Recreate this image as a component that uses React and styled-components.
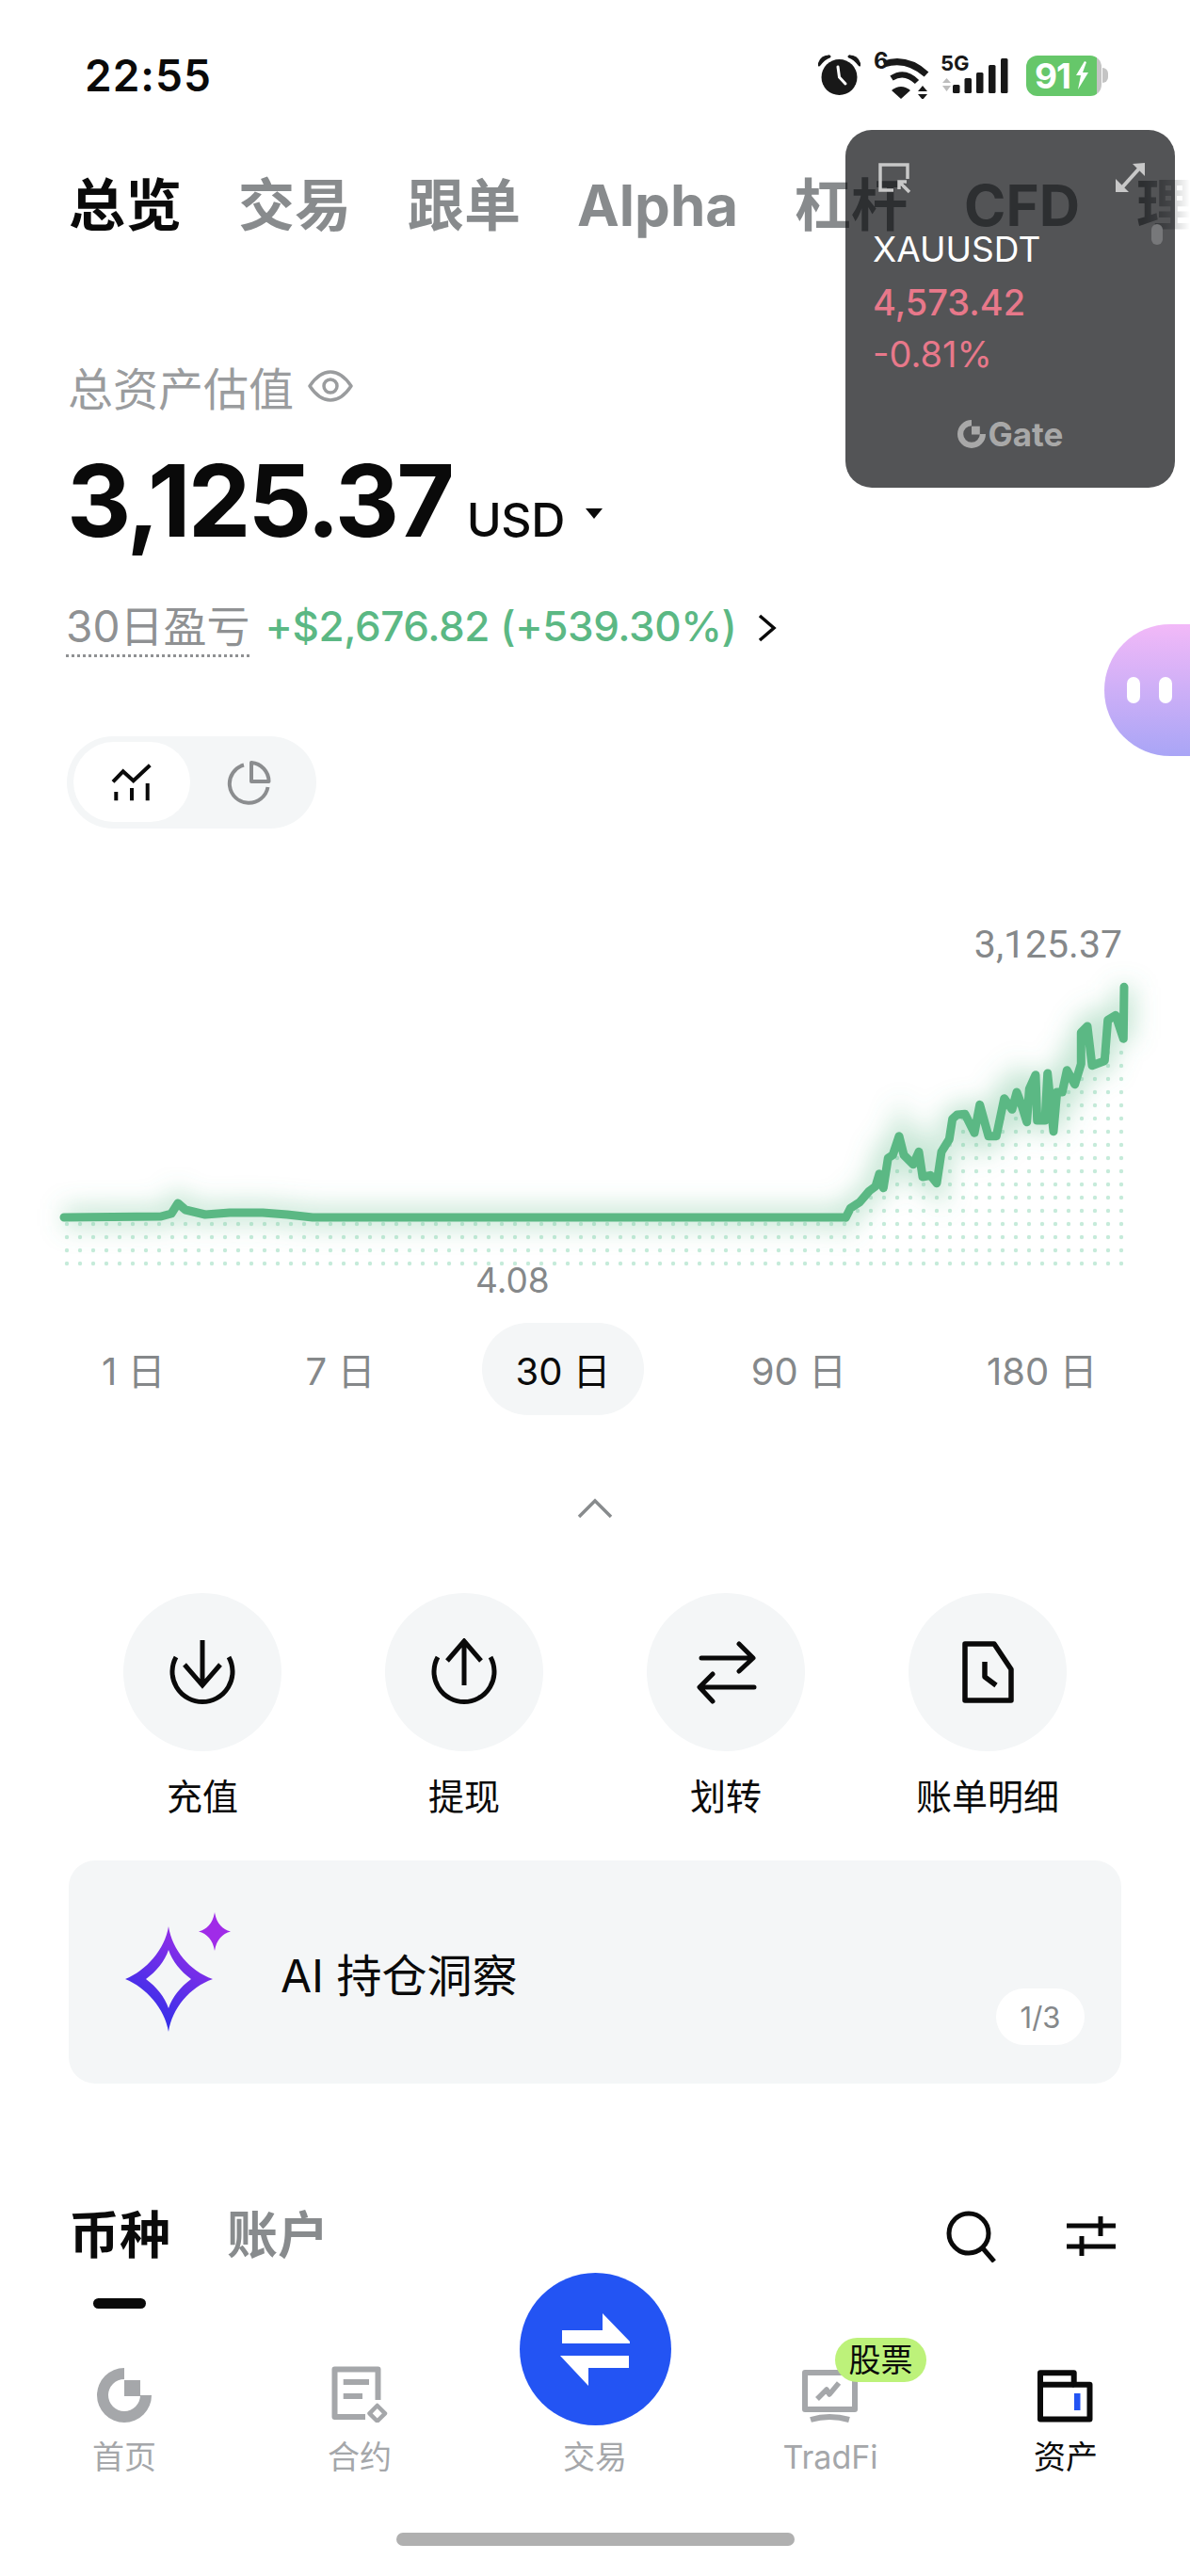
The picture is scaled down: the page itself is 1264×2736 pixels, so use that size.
import React from 'react';
import styled, { createGlobalStyle } from 'styled-components';

const GlobalStyle = createGlobalStyle`
  html, body {
    margin: 0;
    padding: 0;
    background: #fff;
  }
  body {
    font-family: Inter, "Noto Sans CJK SC", sans-serif;
    color: #0a0a0a;
  }
`;

const Page = styled.div`
  position: relative;
  width: 1264px;
  height: 2736px;
  overflow: hidden;
  background: #fff;
`;

const StatusBar = styled.div`
  height: 160px;
  padding: 0 87px 0 90px;
  display: flex;
  align-items: center;
`;

const Clock = styled.div`
  font-size: 46px;
  font-weight: 600;
  letter-spacing: 1px;
  margin-right: auto;
`;

const StatusIcons = styled.div`
  display: flex;
  align-items: center;
`;

const Battery = styled.div`
  display: flex;
  align-items: center;
  margin-left: 17px;
  height: 43px;
  width: 87px;
`;

const BatteryBody = styled.div`
  width: 80px;
  height: 43px;
  box-sizing: border-box;
  border-radius: 12px;
  background: linear-gradient(90deg, #66c76a 94%, #c4c4c4 94%);
  color: #fff;
  display: flex;
  align-items: center;
  padding-left: 9px;
  gap: 5px;
  font-size: 37px;
  font-weight: 700;
  letter-spacing: -1px;
`;

const BatteryNub = styled.div`
  width: 6px;
  height: 16px;
  margin-left: 1px;
  border-radius: 0 6px 6px 0;
  background: #c4c4c4;
`;

const TabStrip = styled.div`
  position: relative;
  margin-top: 20px;
  padding-left: 73px;
  height: 76px;
  display: flex;
  gap: 60px;
  overflow: hidden;
  white-space: nowrap;
  &::after {
    content: '';
    position: absolute;
    top: 0;
    right: 0;
    bottom: 0;
    width: 50px;
    background: linear-gradient(90deg, rgba(255, 255, 255, 0), #fff);
  }
`;

const TopTab = styled.div`
  font-size: 60px;
  line-height: 76px;
  font-weight: 700;
  flex-shrink: 0;
  color: ${(p) => (p.$active ? '#0a0a0a' : '#888b8d')};
`;

const AssetLabel = styled.div`
  margin-top: 124px;
  padding-left: 72px;
  height: 60px;
  display: flex;
  align-items: center;
  gap: 15px;
  font-size: 48px;
  color: #9a9c9e;
`;

const BalanceRow = styled.div`
  margin-top: 32px;
  padding-left: 71px;
  display: flex;
  align-items: baseline;
`;

const BalanceValue = styled.div`
  font-size: 106px;
  line-height: 120px;
  font-weight: 700;
  letter-spacing: -3px;
`;

const Currency = styled.div`
  margin-left: 16px;
  font-size: 50px;
  font-weight: 500;
  letter-spacing: -0.5px;
`;

const CaretDown = styled.div`
  margin-left: 22px;
  align-self: center;
  margin-top: 26px;
  width: 0;
  height: 0;
  border-left: 9px solid transparent;
  border-right: 9px solid transparent;
  border-top: 11px solid #0a0a0a;
`;

const PnlRow = styled.div`
  margin-top: 43px;
  padding-left: 70px;
  display: flex;
  align-items: flex-start;
`;

const PnlLabel = styled.div`
  font-size: 46px;
  line-height: 60px;
  color: #8f9193;
  border-bottom: 3px dotted #8f9193;
`;

const PnlValue = styled.div`
  margin-left: 16px;
  font-size: 44px;
  line-height: 60px;
  font-weight: 500;
  color: #5bb884;
  letter-spacing: -0.4px;
`;

const PnlArrow = styled.svg`
  margin: 17px 0 0 22px;
`;

const ViewToggle = styled.div`
  margin: 84px 0 0 71px;
  width: 265px;
  height: 98px;
  box-sizing: border-box;
  padding: 6px 7px;
  border-radius: 49px;
  background: #f4f6f7;
  display: flex;
`;

const ToggleItem = styled.div`
  width: 124px;
  height: 85px;
  border-radius: 43px;
  display: flex;
  align-items: center;
  justify-content: center;
  background: ${(p) => (p.$active ? '#fff' : 'transparent')};
`;

const ChartValue = styled.div`
  margin-top: 98px;
  padding-right: 72px;
  text-align: right;
  font-family: Roboto, sans-serif;
  font-size: 41px;
  line-height: 50px;
  color: #85888a;
`;

const ChartSvg = styled.svg`
  display: block;
  margin-top: 2px;
  overflow: visible;
`;

const ChartDate = styled.div`
  margin-top: -10px;
  padding-left: 505px;
  font-size: 37px;
  line-height: 40px;
  color: #85888a;
  position: relative;
`;

const RangeRow = styled.div`
  margin-top: 25px;
  padding-left: 73px;
  display: flex;
  gap: 79px;
`;

const RangePill = styled.div`
  height: 98px;
  padding: 0 35px;
  border-radius: 49px;
  display: flex;
  align-items: center;
  font-size: 40px;
  white-space: nowrap;
  color: ${(p) => (p.$active ? '#0a0a0a' : '#85888a')};
  background: ${(p) => (p.$active ? '#f4f6f7' : 'transparent')};
`;

const Collapse = styled.div`
  margin-top: 87px;
  height: 24px;
  display: flex;
  justify-content: center;
`;

const Actions = styled.div`
  margin-top: 78px;
  padding-left: 76px;
  display: grid;
  grid-template-columns: repeat(4, 278px);
`;

const Action = styled.div`
  display: flex;
  flex-direction: column;
  align-items: center;
`;

const ActionCircle = styled.div`
  width: 168px;
  height: 168px;
  border-radius: 50%;
  background: #f4f6f7;
  display: flex;
  align-items: center;
  justify-content: center;
`;

const ActionLabel = styled.div`
  margin-top: 23px;
  font-size: 38px;
  line-height: 50px;
`;

const InsightCard = styled.div`
  position: relative;
  margin: 43px 73px 0;
  height: 237px;
  border-radius: 28px;
  background: #f4f6f7;
  display: flex;
  align-items: center;
  padding-left: 60px;
  gap: 53px;
`;

const InsightText = styled.div`
  font-size: 48px;
`;

const PageBadge = styled.div`
  position: absolute;
  right: 39px;
  bottom: 41px;
  width: 94px;
  height: 60px;
  border-radius: 30px;
  background: #fff;
  display: flex;
  align-items: center;
  justify-content: center;
  font-size: 31px;
  color: #85888a;
`;

const ListHeader = styled.div`
  margin-top: 127px;
  padding: 0 79px 0 73px;
  display: flex;
  gap: 60px;
  height: 112px;
`;

const ListTab = styled.div`
  display: flex;
  flex-direction: column;
  align-items: center;
  font-size: 54px;
  line-height: 70px;
  font-weight: 700;
  color: ${(p) => (p.$active ? '#0a0a0a' : '#888b8d')};
`;

const ListTabMark = styled.div`
  margin-top: 31px;
  width: 56px;
  height: 11px;
  border-radius: 6px;
  background: #0a0a0a;
`;

const ListTools = styled.div`
  margin-left: auto;
  height: 70px;
  display: flex;
  align-items: center;
  gap: 73px;
`;

const BottomNav = styled.div`
  margin-top: -38px;
  padding-left: 7px;
  display: grid;
  grid-template-columns: repeat(5, 250px);
  align-items: end;
`;

const NavItem = styled.div`
  display: flex;
  flex-direction: column;
  align-items: center;
`;

const NavIcon = styled.div`
  position: relative;
  height: 60px;
  display: flex;
  align-items: flex-end;
`;

const TradeButton = styled.div`
  width: 161px;
  height: 162px;
  border-radius: 50%;
  background: #2354f3;
  margin-bottom: -3px;
`;

const NavLabel = styled.div`
  margin-top: 15px;
  font-size: 34px;
  line-height: 44px;
  color: ${(p) => (p.$active ? '#0a0a0a' : '#a5a7aa')};
`;

const NavBadge = styled.div`
  position: absolute;
  left: 35px;
  top: -30px;
  width: 97px;
  height: 47px;
  border-radius: 24px;
  background: #bdf27a;
  color: #0a0a0a;
  font-size: 34px;
  line-height: 47px;
  text-align: center;
`;

const HomeBar = styled.div`
  margin: 58px auto 0;
  width: 423px;
  height: 14px;
  border-radius: 7px;
  background: #b0b0b0;
`;

const AssistantBubble = styled.div`
  position: absolute;
  top: 663px;
  right: 0;
  width: 91px;
  height: 140px;
  border-radius: 70px 0 0 70px;
  background: linear-gradient(180deg, #f2b9f8 0%, #a9a5f6 100%);
  display: flex;
  align-items: center;
  gap: 20px;
  padding-left: 24px;
  box-sizing: border-box;
`;

const AssistantEye = styled.div`
  width: 14px;
  height: 28px;
  border-radius: 7px;
  background: #fff;
`;

const TickerCard = styled.div`
  position: absolute;
  top: 138px;
  left: 898px;
  width: 350px;
  height: 380px;
  box-sizing: border-box;
  padding: 34px 29px 0;
  border-radius: 28px;
  background: rgba(2, 3, 6, 0.68);
  display: flex;
  flex-direction: column;
`;

const TickerTools = styled.div`
  height: 36px;
  display: flex;
  justify-content: space-between;
  padding: 0 0 0 5px;
`;

const TickerSymbol = styled.div`
  margin-top: 34px;
  font-size: 37px;
  line-height: 46px;
  color: #fff;
`;

const TickerPrice = styled.div`
  margin-top: 10px;
  font-size: 38px;
  line-height: 46px;
  font-weight: 500;
  color: #e8788a;
`;

const TickerChange = styled.div`
  margin-top: 9px;
  font-size: 38px;
  line-height: 46px;
  color: #e8788a;
`;

const TickerBrand = styled.div`
  margin-top: 42px;
  display: flex;
  align-items: center;
  justify-content: center;
  gap: 3px;
  font-size: 35px;
  line-height: 40px;
  font-weight: 700;
  color: #a8a8a8;
`;

const TickerScroll = styled.div`
  position: absolute;
  top: 100px;
  right: 13px;
  width: 12px;
  height: 22px;
  border-radius: 6px;
  background: #77787a;
`;

const GateMark = ({ size = 58, color = '#a5a7aa' }) => (
  <svg width={size} height={size} viewBox="0 0 58 58" fill={color}>
    <path d="M29 0A29 29 0 1 0 58 29H46A17 17 0 1 1 29 12Z" />
    <rect x="29" y="13" width="17" height="17" />
  </svg>
);

const AlarmIcon = () => (
  <svg width="45" height="45" viewBox="0 0 45 45">
    <circle cx="22.5" cy="24" r="19" fill="#181818" />
    <path d="M1 11Q3 2 12 2Q6 4 1 11ZM44 11Q42 2 33 2Q39 4 44 11Z" fill="#181818" stroke="#181818" strokeWidth="3" strokeLinejoin="round" />
    <path d="M21 13L22.5 24L29 31" fill="none" stroke="#fff" strokeWidth="3" strokeLinecap="round" strokeLinejoin="round" />
  </svg>
);

const WifiIcon = () => (
  <svg width="62" height="50" viewBox="0 0 62 50" style={{ marginLeft: 13 }}>
    <text x="1" y="18" fontSize="24" fontWeight="700" fill="#181818" fontFamily="Inter, sans-serif">6</text>
    <path d="M12 13Q36 5 57 24" fill="none" stroke="#181818" strokeWidth="7" />
    <path d="M20 28Q34 19 47 32" fill="none" stroke="#181818" strokeWidth="6" />
    <path d="M20 41Q30 33 40 41L30 50Z" fill="#181818" />
    <path d="M48 42H58L53 36ZM48 45H58L53 51Z" fill="#181818" />
  </svg>
);

const SignalIcon = () => (
  <svg width="74" height="46" viewBox="0 0 74 46" style={{ marginLeft: 10 }}>
    <text x="0" y="18" fontSize="22" fontWeight="700" fill="#181818" fontFamily="Inter, sans-serif">5G</text>
    <path d="M2 31H11L6.5 26ZM2 34H11L6.5 40Z" fill="#bdbdbd" />
    <rect x="13" y="33" width="7.5" height="9" rx="1.5" fill="#181818" />
    <rect x="25.5" y="26" width="7.5" height="16" rx="1.5" fill="#181818" />
    <rect x="38" y="20" width="7.5" height="22" rx="1.5" fill="#181818" />
    <rect x="51" y="12" width="7.5" height="30" rx="1.5" fill="#181818" />
    <rect x="64" y="5" width="7.5" height="37" rx="1.5" fill="#181818" />
  </svg>
);

const BoltIcon = () => (
  <svg width="14" height="30" viewBox="0 0 14 30" fill="#fff">
    <path d="M10 0L1 15H6L3 30L14 12H8L12 1Z" />
  </svg>
);

const EyeIcon = () => (
  <svg width="48" height="36" viewBox="0 0 48 36" fill="none" stroke="#9a9c9e" strokeWidth="3.5">
    <path d="M2 18Q12 3 24 3T46 18Q36 33 24 33T2 18Z" strokeLinejoin="round" />
    <circle cx="24" cy="18" r="7" />
  </svg>
);

const TrendIcon = () => (
  <svg width="44" height="44" viewBox="0 0 44 44" fill="none" stroke="#0a0a0a" strokeWidth="4">
    <path d="M2 21.3L12.7 10.3L23.7 20.3L41.3 3.7" />
    <path d="M5.3 32V41.3M22 28V41.3M38.7 23V41.3" />
  </svg>
);

const PieIcon = () => (
  <svg width="50" height="50" viewBox="0 0 50 50" fill="none" stroke="#8b8d8f" strokeWidth="4">
    <path d="M20 6.5A20.5 20.5 0 1 0 45.5 30" />
    <path d="M28 4V24H46.5A20 20 0 0 0 28 4Z" strokeLinejoin="round" />
  </svg>
);

// traced from the reference, values are full-page coordinates
const flatPart = [
  [68, 1293], [171, 1292], [182, 1289], [189, 1278], [197, 1285], [218, 1290], [244, 1288],
  [279, 1288], [305, 1290], [332, 1293], [898, 1293],
];

const risingPart = [
  [295, 1000], [310, 970], [340, 950], [370, 915], [390, 900], [402, 860], [415, 905], [430, 810], [445, 800],
  [465, 740], [480, 800], [510, 830], [528, 790], [540, 870], [565, 865], [585, 890], [600, 790],
  [625, 750], [635, 685], [650, 672], [675, 670], [705, 730], [722, 640], [750, 740], [775, 740],
  [800, 620], [825, 655], [840, 600], [855, 640], [872, 695], [880, 590], [900, 545], [905, 690],
  [930, 690], [938, 540], [957, 725], [968, 600], [985, 600], [1000, 530], [1025, 575], [1045, 510],
  [1045, 410], [1065, 390], [1080, 515], [1120, 500], [1130, 370], [1155, 355], [1180, 430], [1182, 265],
].map(([x, y]) => [800 + x / 3, 960 + y / 3]);

const CHART_TOP = 1030;
const linePoints = [...flatPart, ...risingPart].map(([x, y]) => [x, y - CHART_TOP]);
const linePath = linePoints.map(([x, y], i) => `${i ? 'L' : 'M'}${x.toFixed(1)} ${y.toFixed(1)}`).join('');
const areaPath = `${linePath}L1194 318L68 318Z`;

const EarningsChart = () => (
  <ChartSvg width="1264" height="320" viewBox="0 0 1264 320">
    <defs>
      <pattern id="dots" patternUnits="userSpaceOnUse" x="64" y="305" width="14" height="14">
        <circle cx="7" cy="7" r="2.2" fill="#c6ebda" />
      </pattern>
      <clipPath id="under-line">
        <path d={areaPath} />
      </clipPath>
      <filter id="glow" x="-10%" y="-40%" width="120%" height="180%">
        <feGaussianBlur stdDeviation="13" />
      </filter>
    </defs>
    <rect x="64" y="0" width="1134" height="320" fill="url(#dots)" clipPath="url(#under-line)" />
    <path d={linePath} fill="none" stroke="#5bb884" strokeOpacity="0.36" strokeWidth="22" filter="url(#glow)" />
    <path d={linePath} fill="none" stroke="#5bb884" strokeWidth="9" strokeLinecap="round" strokeLinejoin="round" />
  </ChartSvg>
);

const DepositIcon = () => (
  <svg width="72" height="72" viewBox="0 0 72 72" fill="none" stroke="#0a0a0a" strokeWidth="5">
    <path d="M8 20A32 32 0 1 0 64 20" />
    <path d="M36 2V48M17 28L36 50L55 28" />
  </svg>
);

const WithdrawIcon = () => (
  <svg width="72" height="72" viewBox="0 0 72 72" fill="none" stroke="#0a0a0a" strokeWidth="5">
    <path d="M8 20A32 32 0 1 0 64 20" />
    <path d="M36 4V50M18 24L36 3L54 24" />
  </svg>
);

const TransferIcon = () => (
  <svg width="72" height="72" viewBox="0 0 72 72" fill="none" stroke="#0a0a0a" strokeWidth="5" strokeLinecap="round" strokeLinejoin="round">
    <path d="M10 21H64M50 6L65 21L50 35" />
    <path d="M66 52H9M22 38L8 52L22 67" />
  </svg>
);

const BillIcon = () => (
  <svg width="72" height="72" viewBox="0 0 72 72" fill="none" stroke="#0a0a0a" strokeWidth="5.5" strokeLinejoin="round">
    <path d="M12 6H43L61 33V66H12Z" />
    <path d="M33 25V41L45 50" />
  </svg>
);

const SparkIcon = () => (
  <svg width="112" height="127" viewBox="0 0 112 127">
    <defs>
      <linearGradient id="spark" x1="0.7" y1="0" x2="0.2" y2="1">
        <stop offset="0" stopColor="#9b2de8" />
        <stop offset="1" stopColor="#2430ea" />
      </linearGradient>
    </defs>
    <path
      fillRule="evenodd"
      fill="url(#spark)"
      d="M46 15C50 40 68 62 93 71C68 80 50 102 46 127C42 102 22 80 0 71C22 62 42 40 46 15ZM46 40C42 52 33 63 22 71C33 79 42 90 46 102C50 90 59 79 70 71C59 63 50 52 46 40Z"
    />
    <path fill="#a02be8" d="M95 0C97 12 103 18 112 20.5C103 23 97 29 95 41C93 29 87 23 78 20.5C87 18 93 12 95 0Z" />
  </svg>
);

const SearchIcon = () => (
  <svg width="56" height="56" viewBox="0 0 56 56" fill="none" stroke="#0a0a0a" strokeWidth="5">
    <circle cx="25" cy="25" r="21" />
    <path d="M40 41L52 55" />
  </svg>
);

const FilterIcon = () => (
  <svg width="52" height="42" viewBox="0 0 52 42" fill="none" stroke="#0a0a0a" strokeWidth="5">
    <path d="M0 10H52M36 0V21" />
    <path d="M0 32H52M16 21V42" />
  </svg>
);

const ContractIcon = () => (
  <svg width="60" height="60" viewBox="0 0 60 60" fill="none" stroke="#a5a7aa" strokeWidth="6" strokeLinejoin="round">
    <path d="M49.5 36V3.5H3.5V54H36" />
    <path d="M12.7 17H40M12.7 32H33" />
    <path d="M48.7 42L57 50.3L48.7 58.5L40.5 50.3Z" strokeWidth="4.5" />
  </svg>
);

const TradfiIcon = () => (
  <svg width="60" height="56" viewBox="0 0 60 56" fill="none" stroke="#a5a7aa" strokeWidth="6" strokeLinejoin="round">
    <path d="M3 3H56V42H3Z" />
    <path d="M16 31L26 21L29 26L39 14" strokeWidth="5.5" />
    <path d="M9 53Q29 47 50 53" />
  </svg>
);

const WalletIcon = () => (
  <svg width="60" height="56" viewBox="0 0 60 56" fill="none" stroke="#0a0a0a" strokeWidth="6" strokeLinejoin="round">
    <path d="M3 3.3H38.7V15.7H55.5V52.5H3Z" />
    <path d="M3 15.7H38.7" />
    <rect x="39" y="25" width="6.5" height="18" fill="#2354f3" stroke="none" />
  </svg>
);

const TradeArrows = () => (
  <svg width="161" height="162" viewBox="0 0 161 162" fill="#fff">
    <path d="M45 61H88V43L117 73V75H45Z" />
    <path d="M116 88H43L73 120V101H116Z" />
  </svg>
);

const ExitPipIcon = () => (
  <svg width="36" height="36" viewBox="0 0 36 36" fill="none" stroke="#c8c8c8" strokeWidth="3.5">
    <path d="M32 18V3H3V30H17" />
    <path d="M34 32L23 21M23 29V21H31" />
  </svg>
);

const ExpandIcon = () => (
  <svg width="36" height="36" viewBox="0 0 36 36" fill="#c8c8c8">
    <path d="M20 2L33 1L33 15Z" />
    <path d="M2 18V32H16Z" />
    <path d="M9 27L27 7" stroke="#c8c8c8" strokeWidth="4" />
  </svg>
);

const topTabs = ['总览', '交易', '跟单', 'Alpha', '杠杆', 'CFD', '理财'];
const ranges = ['1 日', '7 日', '30 日', '90 日', '180 日'];
const actions = [
  { label: '充值', icon: <DepositIcon /> },
  { label: '提现', icon: <WithdrawIcon /> },
  { label: '划转', icon: <TransferIcon /> },
  { label: '账单明细', icon: <BillIcon /> },
];

function App() {
  return (
    <Page>
      <GlobalStyle />

      <StatusBar>
        <Clock>22:55</Clock>
        <StatusIcons>
          <AlarmIcon />
          <WifiIcon />
          <SignalIcon />
          <Battery>
            <BatteryBody>
              91
              <BoltIcon />
            </BatteryBody>
            <BatteryNub />
          </Battery>
        </StatusIcons>
      </StatusBar>

      <TabStrip>
        {topTabs.map((tab, i) => (
          <TopTab key={tab} $active={i === 0}>{tab}</TopTab>
        ))}
      </TabStrip>

      <AssetLabel>
        总资产估值
        <EyeIcon />
      </AssetLabel>

      <BalanceRow>
        <BalanceValue>3,125.37</BalanceValue>
        <Currency>USD</Currency>
        <CaretDown />
      </BalanceRow>

      <PnlRow>
        <PnlLabel>30日盈亏</PnlLabel>
        <PnlValue>+$2,676.82 (+539.30%)</PnlValue>
        <PnlArrow width="22" height="30" viewBox="0 0 22 30" fill="none" stroke="#0a0a0a" strokeWidth="3.5">
          <path d="M3 2L18 15L3 28" />
        </PnlArrow>
      </PnlRow>

      <ViewToggle>
        <ToggleItem $active><TrendIcon /></ToggleItem>
        <ToggleItem><PieIcon /></ToggleItem>
      </ViewToggle>

      <ChartValue>3,125.37</ChartValue>
      <EarningsChart />
      <ChartDate>4.08</ChartDate>

      <RangeRow>
        {ranges.map((range) => (
          <RangePill key={range} $active={range === '30 日'}>{range}</RangePill>
        ))}
      </RangeRow>

      <Collapse>
        <svg width="38" height="24" viewBox="0 0 38 24" fill="none" stroke="#888b8d" strokeWidth="3.5">
          <path d="M2 21L19 4L36 21" />
        </svg>
      </Collapse>

      <Actions>
        {actions.map((action) => (
          <Action key={action.label}>
            <ActionCircle>{action.icon}</ActionCircle>
            <ActionLabel>{action.label}</ActionLabel>
          </Action>
        ))}
      </Actions>

      <InsightCard>
        <SparkIcon />
        <InsightText>AI 持仓洞察</InsightText>
        <PageBadge>1/3</PageBadge>
      </InsightCard>

      <ListHeader>
        <ListTab $active>
          币种
          <ListTabMark />
        </ListTab>
        <ListTab>账户</ListTab>
        <ListTools>
          <SearchIcon />
          <FilterIcon />
        </ListTools>
      </ListHeader>

      <BottomNav>
        <NavItem>
          <NavIcon><GateMark /></NavIcon>
          <NavLabel>首页</NavLabel>
        </NavItem>
        <NavItem>
          <NavIcon><ContractIcon /></NavIcon>
          <NavLabel>合约</NavLabel>
        </NavItem>
        <NavItem>
          <TradeButton><TradeArrows /></TradeButton>
          <NavLabel>交易</NavLabel>
        </NavItem>
        <NavItem>
          <NavIcon>
            <TradfiIcon />
            <NavBadge>股票</NavBadge>
          </NavIcon>
          <NavLabel>TradFi</NavLabel>
        </NavItem>
        <NavItem>
          <NavIcon><WalletIcon /></NavIcon>
          <NavLabel $active>资产</NavLabel>
        </NavItem>
      </BottomNav>

      <HomeBar />

      <AssistantBubble>
        <AssistantEye />
        <AssistantEye />
      </AssistantBubble>

      <TickerCard>
        <TickerTools>
          <ExitPipIcon />
          <ExpandIcon />
        </TickerTools>
        <TickerSymbol>XAUUSDT</TickerSymbol>
        <TickerPrice>4,573.42</TickerPrice>
        <TickerChange>-0.81%</TickerChange>
        <TickerBrand>
          <GateMark size={30} color="#a8a8a8" />
          Gate
        </TickerBrand>
        <TickerScroll />
      </TickerCard>
    </Page>
  );
}

export default App;
